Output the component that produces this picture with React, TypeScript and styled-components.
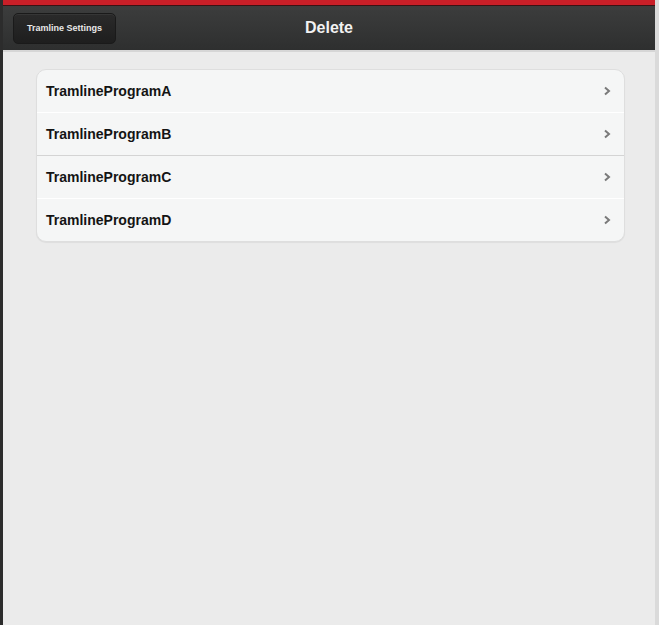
import styled, { createGlobalStyle } from "styled-components";

const GlobalStyle = createGlobalStyle`
  html, body {
    margin: 0;
    padding: 0;
    background: #ebebeb;
    font-family: "Liberation Sans", Arial, sans-serif;
  }
`;

const Frame = styled.div`
  width: 659px;
  height: 625px;
  box-sizing: border-box;
  border-left: 3px solid #2c2c2c;
  border-right: 4px solid #dadada;
  background: #ebebeb;
  display: flex;
  flex-direction: column;
  overflow: hidden;
`;

const RedBar = styled.div`
  height: 5px;
  background: #c91f28;
  border-bottom: 1px solid #3a1214;
  margin-left: -3px;
  margin-right: -4px;
`;

const Header = styled.header`
  height: 44px;
  background: linear-gradient(#3c3d3d, #2e2f2f);
  border-bottom: 2px solid #d6d6d6;
  display: grid;
  grid-template-columns: 1fr auto 1fr;
  align-items: center;
  padding: 0 10px;
  margin-right: -4px;
  border-right: 4px solid #4a4a4a;
`;

const BackButton = styled.button`
  justify-self: start;
  height: 31px;
  padding: 0 13px;
  border: 1px solid #1a1a1a;
  border-radius: 5px;
  background: linear-gradient(#2a2a2a, #1e1e1e);
  color: #e8e8e8;
  font-family: "Liberation Sans", Arial, sans-serif;
  font-size: 9px;
  font-weight: bold;
  box-shadow: inset 0 1px 0 rgba(255, 255, 255, 0.06);
`;

const Title = styled.h1`
  margin: 0;
  color: #f2f2f2;
  font-size: 16px;
  font-weight: bold;
`;

const Content = styled.main`
  padding: 17px 30px 0 33px;
`;

const List = styled.ul`
  list-style: none;
  margin: 0;
  padding: 0;
  background: #f5f6f6;
  border: 1px solid #dedede;
  border-radius: 10px;
  box-shadow: 0 1px 1px rgba(0, 0, 0, 0.06);
  overflow: hidden;
`;

const Row = styled.li<{ $strong?: boolean }>`
  height: 42px;
  display: flex;
  align-items: center;
  justify-content: space-between;
  padding: 0 13px 0 9px;
  border-top: 1px solid ${(p) => (p.$strong ? "#d4d4d4" : "#ffffff")};
  font-size: 14px;
  font-weight: bold;
  color: #141414;

  &:first-child {
    border-top: none;
  }
`;

const Chevron = styled.svg`
  width: 8px;
  height: 10px;
`;

const programs = ["A", "B", "C", "D"];

export default function App() {
  return (
    <>
      <GlobalStyle />
      <Frame>
        <RedBar />
        <Header>
          <BackButton>Tramline Settings</BackButton>
          <Title>Delete</Title>
          <span />
        </Header>
        <Content>
          <List>
            {programs.map((p, i) => (
              <Row key={p} $strong={i === 2}>
                <span>TramlineProgram{p}</span>
                <Chevron viewBox="0 0 8 10">
                  <path d="M2 1.5 L6 5 L2 8.5" fill="none" stroke="#7a7a7a" strokeWidth="2" />
                </Chevron>
              </Row>
            ))}
          </List>
        </Content>
      </Frame>
    </>
  );
}
